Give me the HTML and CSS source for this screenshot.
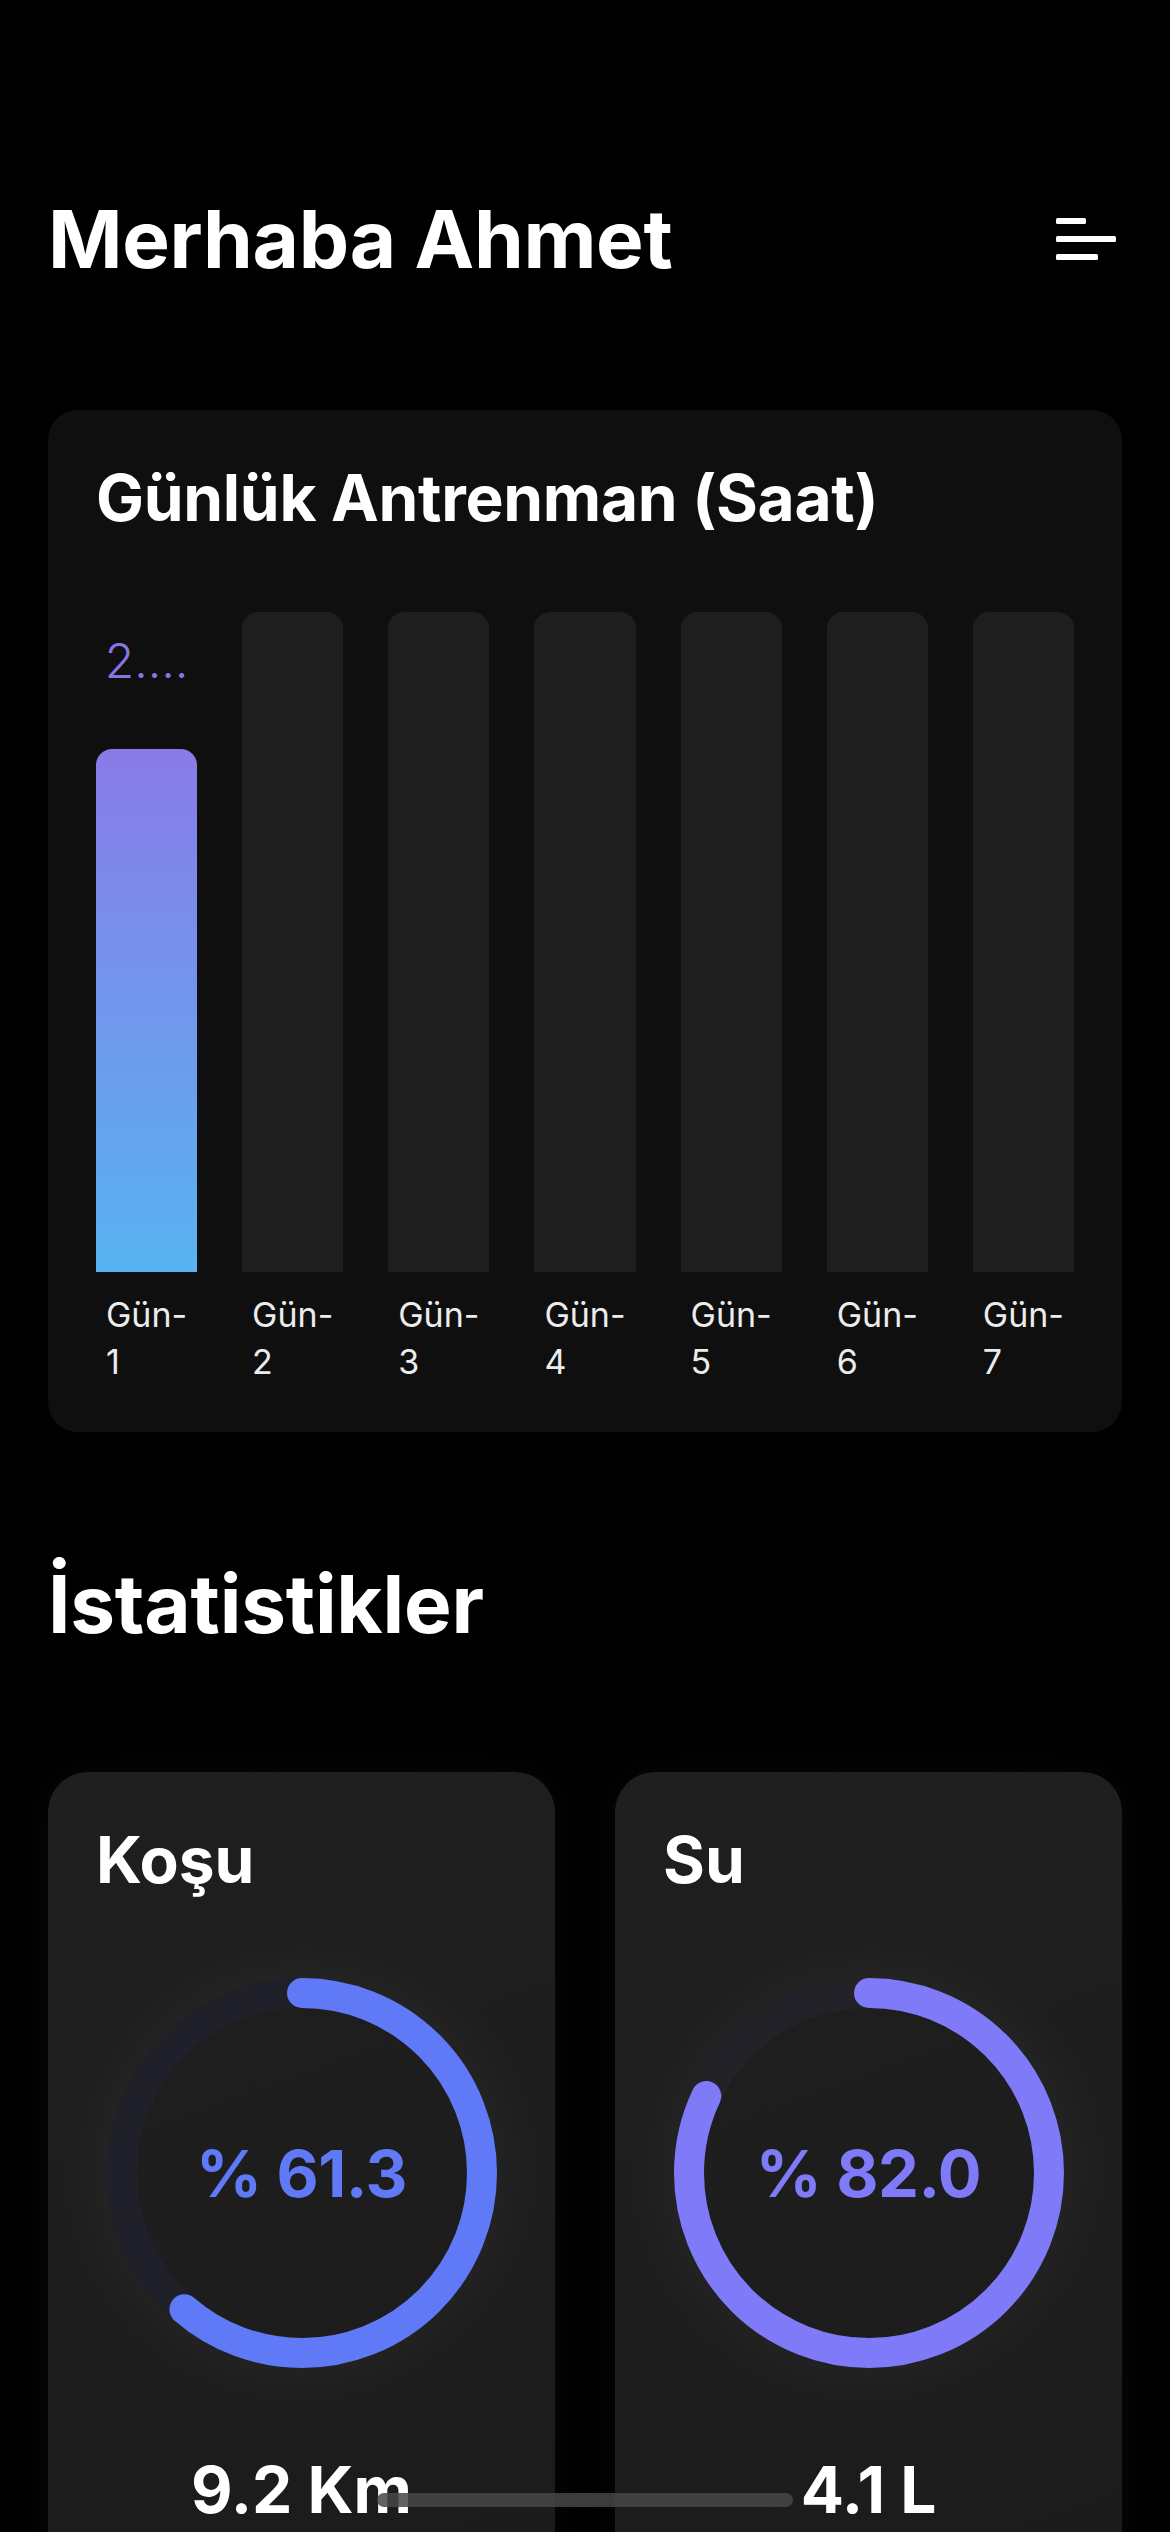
FILE: index.html
```html
<!DOCTYPE html>
<html lang="tr">
<head>
<meta charset="utf-8">
<title>Merhaba Ahmet</title>
<link rel="stylesheet" href="styles.css">
</head>
<body>
<div class="screen">
  <header class="header">
    <h1 class="greeting">Merhaba Ahmet</h1>
    <button class="menu-btn" aria-label="Menü">
      <svg width="60" height="42" viewBox="0 0 60 42">
        <rect x="0" y="0" width="30" height="6" rx="1.5" fill="#fff"/>
        <rect x="0" y="18" width="60" height="6" rx="1.5" fill="#fff"/>
        <rect x="0" y="36" width="42" height="6" rx="1.5" fill="#fff"/>
      </svg>
    </button>
  </header>

  <section class="chart-card">
    <h2 class="card-title">Günlük Antrenman (Saat)</h2>
    <div class="chart">
      <div class="col">
        <div class="plot">
          <span class="value">2.…</span>
          <div class="bar bar-fill" style="height: 523px"></div>
        </div>
        <div class="day"><span>Gün-<br>1</span></div>
      </div>
      <div class="col">
        <div class="plot"><div class="bar bar-empty"></div></div>
        <div class="day"><span>Gün-<br>2</span></div>
      </div>
      <div class="col">
        <div class="plot"><div class="bar bar-empty"></div></div>
        <div class="day"><span>Gün-<br>3</span></div>
      </div>
      <div class="col">
        <div class="plot"><div class="bar bar-empty"></div></div>
        <div class="day"><span>Gün-<br>4</span></div>
      </div>
      <div class="col">
        <div class="plot"><div class="bar bar-empty"></div></div>
        <div class="day"><span>Gün-<br>5</span></div>
      </div>
      <div class="col">
        <div class="plot"><div class="bar bar-empty"></div></div>
        <div class="day"><span>Gün-<br>6</span></div>
      </div>
      <div class="col">
        <div class="plot"><div class="bar bar-empty"></div></div>
        <div class="day"><span>Gün-<br>7</span></div>
      </div>
    </div>
  </section>

  <h2 class="section-title">İstatistikler</h2>

  <div class="stats">
    <section class="stat-card run">
      <h3 class="stat-title">Koşu</h3>
      <div class="ring">
        <svg width="390" height="390" viewBox="0 0 390 390">
          <circle class="track" cx="195" cy="195" r="180"/>
          <circle class="progress" cx="195" cy="195" r="180" stroke-dasharray="693.3 1200" transform="rotate(-90 195 195)"/>
        </svg>
        <span class="percent">% 61.3</span>
      </div>
      <div class="stat-value">9.2 Km</div>
    </section>
    <section class="stat-card water">
      <h3 class="stat-title">Su</h3>
      <div class="ring">
        <svg width="390" height="390" viewBox="0 0 390 390">
          <circle class="track" cx="195" cy="195" r="180"/>
          <circle class="progress" cx="195" cy="195" r="180" stroke-dasharray="927.4 1200" transform="rotate(-90 195 195)"/>
        </svg>
        <span class="percent">% 82.0</span>
      </div>
      <div class="stat-value">4.1 L</div>
    </section>
  </div>

  <div class="home-indicator"></div>
</div>
</body>
</html>
```

FILE: styles.css
```css
* {
  box-sizing: border-box;
}

html, body {
  margin: 0;
  padding: 0;
  background: #000;
}

body {
  font-family: Inter, "Noto Sans", "Liberation Sans", sans-serif;
  color: #fff;
}

.screen {
  position: relative;
  width: 1170px;
  height: 2532px;
  overflow: hidden;
  padding: 199px 48px 0 48px;
}

.header {
  display: flex;
  align-items: center;
  justify-content: space-between;
  padding-right: 6px;
}

.greeting {
  margin: 0;
  font-size: 80px;
  line-height: 1;
  font-weight: 700;
  letter-spacing: -0.3px;
}

.menu-btn {
  background: none;
  border: 0;
  padding: 0;
  display: flex;
}

.chart-card {
  margin-top: 131px;
  background: #0f0f0f;
  border-radius: 30px;
  padding: 56px 48px 47px 48px;
}

.card-title {
  margin: 0;
  font-size: 64px;
  line-height: 1;
  font-weight: 700;
  letter-spacing: -0.3px;
}

.chart {
  margin-top: 82px;
  display: grid;
  grid-template-columns: repeat(7, 1fr);
  column-gap: 45px;
}

.col {
  display: flex;
  flex-direction: column;
}

.plot {
  height: 660px;
  display: flex;
  flex-direction: column;
  justify-content: flex-end;
  align-items: stretch;
}

.value {
  font-size: 48px;
  line-height: 1;
  font-weight: 300;
  color: #8576e2;
  text-align: center;
  margin-bottom: 64px;
  white-space: nowrap;
}

.bar {
  border-radius: 16px 16px 0 0;
}

.bar-empty {
  height: 660px;
  background: #1e1e1e;
}

.bar-fill {
  background: linear-gradient(180deg, #897be7 0%, #58b3f1 100%);
}

.day {
  margin-top: 19px;
  display: flex;
  justify-content: center;
}

.day span {
  font-size: 34px;
  line-height: 47px;
  font-weight: 400;
  color: #ececec;
  text-align: left;
}

.section-title {
  margin: 132px 0 0 0;
  font-size: 80px;
  line-height: 1;
  font-weight: 700;
  letter-spacing: -0.2px;
}

.stats {
  margin-top: 128px;
  display: grid;
  grid-template-columns: 1fr 1fr;
  column-gap: 60px;
}

.stat-card {
  height: 900px;
  border-radius: 40px;
  background: linear-gradient(160deg, #1f1f1f 0%, #1b1b1b 100%);
  box-shadow: 0 0 40px rgba(255, 255, 255, 0.035);
  padding: 56px 48px 0 48px;
  display: flex;
  flex-direction: column;
}

.stat-title {
  margin: 0;
  font-size: 64px;
  line-height: 1;
  font-weight: 700;
}

.ring {
  position: relative;
  width: 390px;
  height: 390px;
  margin: 86px auto 0 auto;
  border-radius: 50%;
  box-shadow: 0 0 80px rgba(255, 255, 255, 0.06), inset 0 0 70px rgba(255, 255, 255, 0.035);
  display: flex;
  align-items: center;
  justify-content: center;
}

.ring svg {
  position: absolute;
  inset: 0;
}

.track {
  fill: none;
  stroke-width: 30;
}

.progress {
  fill: none;
  stroke-width: 30;
  stroke-linecap: round;
}

.run .track { stroke: #1f2029; }
.run .progress { stroke: #6079f6; }
.run .percent { color: #6079f6; }

.water .track { stroke: #232229; }
.water .progress { stroke: #7f7af8; }
.water .percent { color: #7f7af8; }

.percent {
  position: relative;
  font-size: 65px;
  line-height: 1;
  font-weight: 700;
  letter-spacing: -0.5px;
}

.stat-value {
  margin-top: 90px;
  text-align: center;
  font-size: 64px;
  line-height: 1;
  font-weight: 700;
}

.home-indicator {
  position: absolute;
  left: 377px;
  top: 2493px;
  width: 416px;
  height: 14px;
  border-radius: 7px;
  background: rgba(70, 70, 70, 0.85);
}
```
